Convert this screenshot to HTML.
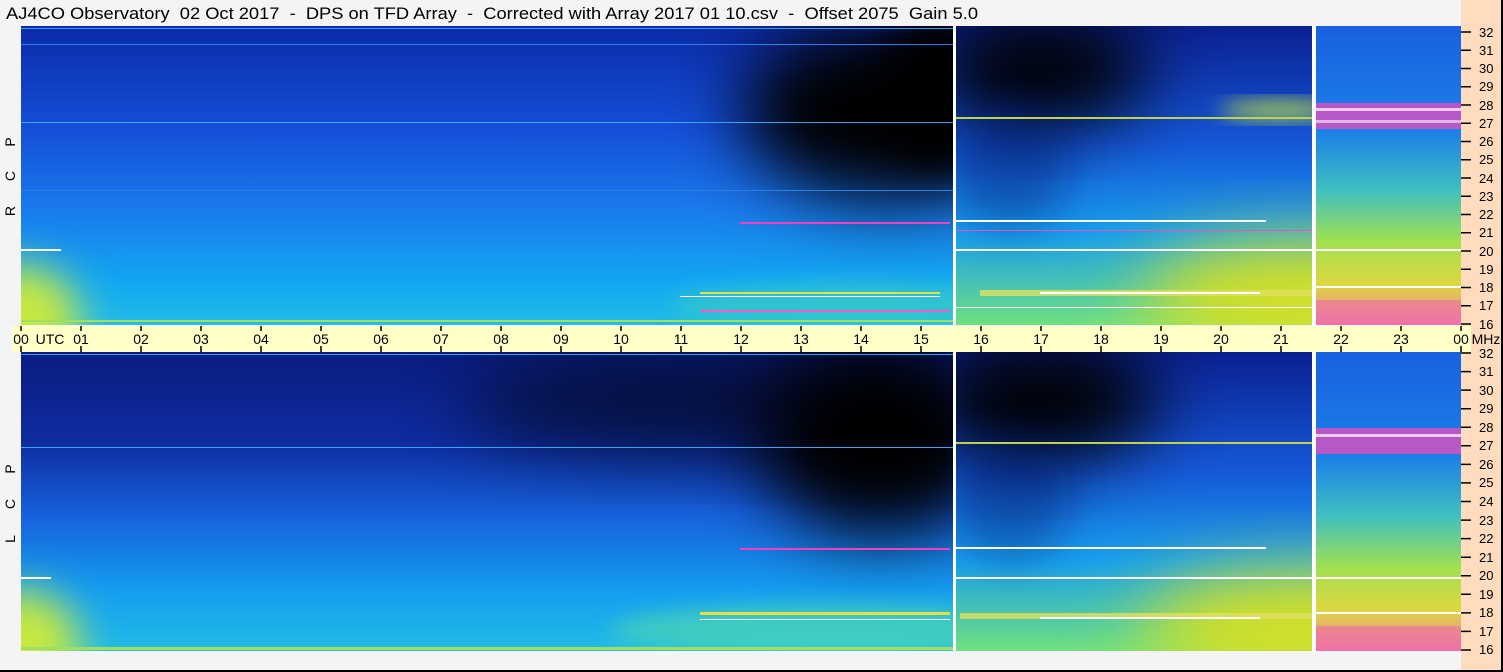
<!DOCTYPE html>
<html><head><meta charset="utf-8"><style>
html,body{margin:0;padding:0;background:#f4f4f6;width:1503px;height:672px;overflow:hidden}
svg{position:absolute;left:0;top:0}
text{font-family:"Liberation Sans",sans-serif}
</style></head><body>
<svg width="1503" height="672" viewBox="0 0 1503 672">
<defs>
<filter id="b10" x="-50%" y="-50%" width="200%" height="200%"><feGaussianBlur stdDeviation="10"/></filter>
<filter id="b20" x="-50%" y="-50%" width="200%" height="200%"><feGaussianBlur stdDeviation="20"/></filter>
<filter id="b35" x="-50%" y="-50%" width="200%" height="200%"><feGaussianBlur stdDeviation="35"/></filter>
<linearGradient id="gA" x1="0" y1="0" x2="0" y2="1">
<stop offset="0" stop-color="#0b2aa8"/><stop offset="0.35" stop-color="#1450d8"/><stop offset="0.6" stop-color="#1a78ec"/><stop offset="0.85" stop-color="#12a6f2"/><stop offset="1" stop-color="#22bce6"/></linearGradient>
<linearGradient id="gA2" x1="0" y1="0" x2="0" y2="1">
<stop offset="0" stop-color="#0a1c80"/><stop offset="0.3" stop-color="#0e2ca0"/><stop offset="0.55" stop-color="#1662dc"/><stop offset="0.8" stop-color="#149ef0"/><stop offset="1" stop-color="#22bce6"/></linearGradient>
<linearGradient id="gB" x1="0" y1="0" x2="0" y2="1">
<stop offset="0" stop-color="#0a2090"/><stop offset="0.4" stop-color="#1558d8"/><stop offset="0.7" stop-color="#18a0ec"/><stop offset="1" stop-color="#70e080"/></linearGradient>
<linearGradient id="gC" x1="0" y1="0" x2="0" y2="1">
<stop offset="0" stop-color="#1860e0"/><stop offset="0.35" stop-color="#1c80e8"/><stop offset="0.55" stop-color="#40c0c0"/><stop offset="0.72" stop-color="#a0e050"/><stop offset="0.86" stop-color="#dcd840"/><stop offset="1" stop-color="#f080a0"/></linearGradient>
<clipPath id="cA1"><rect x="21" y="26" width="932" height="299"/></clipPath>
<clipPath id="cB1"><rect x="956" y="26" width="356" height="299"/></clipPath>
<clipPath id="cC1"><rect x="1316" y="26" width="145" height="299"/></clipPath>
<clipPath id="cA2"><rect x="21" y="352" width="932" height="299"/></clipPath>
<clipPath id="cB2"><rect x="956" y="352" width="356" height="299"/></clipPath>
<clipPath id="cC2"><rect x="1316" y="352" width="145" height="299"/></clipPath>
</defs>
<rect x="0" y="0" width="1503" height="672" fill="#f4f4f6"/>
<rect x="1461" y="0" width="40" height="670" fill="#ffdcbe"/>
<rect x="1501" y="0" width="2" height="672" fill="#000"/>
<rect x="0" y="670" width="1503" height="2" fill="#000"/>
<text x="6" y="19" font-size="16.5" fill="#000" xml:space="preserve" textLength="972" lengthAdjust="spacingAndGlyphs">AJ4CO Observatory  02 Oct 2017  -  DPS on TFD Array  -  Corrected with Array 2017 01 10.csv  -  Offset 2075  Gain 5.0</text>

<rect x="21" y="26" width="1440" height="299" fill="#fff"/>
<g clip-path="url(#cA1)">
<rect x="21" y="26" width="932" height="299" fill="url(#gA)"/>
<ellipse cx="890" cy="110" rx="150" ry="90" fill="#000" filter="url(#b35)"/>
<ellipse cx="940" cy="90" rx="60" ry="80" fill="#000" filter="url(#b20)"/>
<ellipse cx="20" cy="320" rx="60" ry="55" fill="#c8e840" filter="url(#b20)"/>
<ellipse cx="860" cy="305" rx="190" ry="22" fill="#40d0c0" opacity="0.6" filter="url(#b10)"/>
<rect x="21" y="28" width="932" height="1" fill="#30a0f0"/>
<rect x="21" y="44" width="932" height="1" fill="#2a80e8"/>
<rect x="21" y="122" width="932" height="1" fill="#40a0f0"/>
<rect x="21" y="190" width="932" height="1" fill="#2a80e0"/>
<rect x="740" y="222" width="210" height="2" fill="#f040c0"/>
<rect x="700" y="292" width="240" height="2" fill="#e8e040"/>
<rect x="680" y="296" width="260" height="1" fill="#ffffff"/>
<rect x="700" y="310" width="250" height="2" fill="#f060c0"/>
<rect x="21" y="249" width="40" height="2" fill="#ffffff"/>
<rect x="21" y="320" width="932" height="2" fill="#a0e060"/>
</g>
<g clip-path="url(#cB1)">
<rect x="956" y="26" width="356" height="299" fill="url(#gB)"/>
<ellipse cx="1040" cy="70" rx="110" ry="55" fill="#000" filter="url(#b35)"/>
<ellipse cx="1010" cy="170" rx="60" ry="60" fill="#041060" opacity="0.35" filter="url(#b20)"/>
<ellipse cx="1310" cy="300" rx="170" ry="60" fill="#d8e020" filter="url(#b35)"/>
<ellipse cx="1280" cy="110" rx="60" ry="8" fill="#c0e040" filter="url(#b10)"/>
<rect x="956" y="117" width="356" height="2" fill="#c0d050"/>
<rect x="956" y="220" width="310" height="2" fill="#fff"/>
<rect x="956" y="230" width="356" height="1" fill="#f050c0"/>
<rect x="956" y="249" width="356" height="2" fill="#fff"/>
<rect x="980" y="290" width="332" height="6" fill="#e0e060" opacity="0.8"/>
<rect x="1040" y="292" width="220" height="2" fill="#fff"/>
<rect x="956" y="307" width="356" height="1" fill="#fff"/>
</g>
<g clip-path="url(#cC1)">
<rect x="1316" y="26" width="145" height="299" fill="url(#gC)"/>
<rect x="1316" y="103" width="145" height="26" fill="#e050c0" opacity="0.8"/>
<rect x="1316" y="108" width="145" height="3" fill="#fff" opacity="0.7"/>
<rect x="1316" y="120" width="145" height="3" fill="#f0e0f0" opacity="0.7"/>
<rect x="1316" y="249" width="145" height="2" fill="#fff"/>
<rect x="1316" y="286" width="145" height="2" fill="#fff"/>
<rect x="1316" y="300" width="145" height="25" fill="#f060b0" opacity="0.5"/>
</g>
<rect x="953" y="26" width="3" height="299" fill="#fff"/>
<rect x="1312" y="26" width="4" height="299" fill="#fff"/>

<rect x="12" y="326" width="1459" height="26" fill="#ffffc8"/>
<g stroke="#000" stroke-width="1.5">
<path d="M21 326v5M81 326v5M141 326v5M201 326v5M261 326v5M321 326v5M381 326v5M441 326v5M501 326v5M561 326v5M621 326v5M681 326v5M741 326v5M801 326v5M861 326v5M921 326v5M981 326v5M1041 326v5M1101 326v5M1161 326v5M1221 326v5M1281 326v5M1341 326v5M1401 326v5M1461 326v5"/>
<path d="M21 346v6M81 346v6M141 346v6M201 346v6M261 346v6M321 346v6M381 346v6M441 346v6M501 346v6M561 346v6M621 346v6M681 346v6M741 346v6M801 346v6M861 346v6M921 346v6M981 346v6M1041 346v6M1101 346v6M1161 346v6M1221 346v6M1281 346v6M1341 346v6M1401 346v6M1461 346v6"/>
</g>
<g font-size="14" fill="#000" text-anchor="middle">
<text x="21" y="344">00</text><text x="50" y="344">UTC</text><text x="81" y="344">01</text><text x="141" y="344">02</text><text x="201" y="344">03</text><text x="261" y="344">04</text><text x="321" y="344">05</text><text x="381" y="344">06</text><text x="441" y="344">07</text><text x="501" y="344">08</text><text x="561" y="344">09</text><text x="621" y="344">10</text><text x="681" y="344">11</text><text x="741" y="344">12</text><text x="801" y="344">13</text><text x="861" y="344">14</text><text x="921" y="344">15</text><text x="981" y="344">16</text><text x="1041" y="344">17</text><text x="1101" y="344">18</text><text x="1161" y="344">19</text><text x="1221" y="344">20</text><text x="1281" y="344">21</text><text x="1341" y="344">22</text><text x="1401" y="344">23</text><text x="1461" y="344">00</text><text x="1486" y="344">MHz</text>
</g>

<rect x="21" y="352" width="1440" height="299" fill="#fff"/>
<g clip-path="url(#cA2)">
<rect x="21" y="352" width="932" height="299" fill="url(#gA2)"/>
<ellipse cx="720" cy="405" rx="260" ry="50" fill="#000" opacity="0.6" filter="url(#b35)"/>
<ellipse cx="880" cy="440" rx="120" ry="95" fill="#000" filter="url(#b35)"/>
<ellipse cx="20" cy="645" rx="60" ry="55" fill="#c8e840" filter="url(#b20)"/>
<ellipse cx="830" cy="630" rx="220" ry="25" fill="#50d8b0" opacity="0.7" filter="url(#b10)"/>
<rect x="21" y="354" width="932" height="1" fill="#30a0f0"/>
<rect x="21" y="447" width="932" height="1" fill="#40a0f0"/>
<rect x="740" y="548" width="210" height="2" fill="#f040c0"/>
<rect x="700" y="612" width="250" height="3" fill="#e8e040"/>
<rect x="700" y="619" width="250" height="1" fill="#fff"/>
<rect x="21" y="577" width="30" height="2" fill="#fff"/>
<rect x="21" y="647" width="932" height="3" fill="#a0e060"/>
</g>
<g clip-path="url(#cB2)">
<rect x="956" y="352" width="356" height="299" fill="url(#gB)"/>
<ellipse cx="1040" cy="400" rx="120" ry="60" fill="#000" filter="url(#b35)"/>
<ellipse cx="1010" cy="500" rx="60" ry="60" fill="#041060" opacity="0.35" filter="url(#b20)"/>
<ellipse cx="1310" cy="630" rx="170" ry="60" fill="#d8e020" filter="url(#b35)"/>
<rect x="956" y="442" width="356" height="2" fill="#c0d050"/>
<rect x="956" y="547" width="310" height="2" fill="#fff"/>
<rect x="956" y="577" width="356" height="2" fill="#fff"/>
<rect x="960" y="613" width="352" height="6" fill="#e0e060" opacity="0.8"/>
<rect x="1040" y="617" width="220" height="2" fill="#fff"/>
</g>
<g clip-path="url(#cC2)">
<rect x="1316" y="352" width="145" height="299" fill="url(#gC)"/>
<rect x="1316" y="428" width="145" height="26" fill="#e050c0" opacity="0.8"/>
<rect x="1316" y="434" width="145" height="3" fill="#fff" opacity="0.7"/>
<rect x="1316" y="577" width="145" height="2" fill="#fff"/>
<rect x="1316" y="612" width="145" height="2" fill="#fff"/>
<rect x="1316" y="626" width="145" height="25" fill="#f060b0" opacity="0.5"/>
</g>
<rect x="953" y="352" width="3" height="299" fill="#fff"/>
<rect x="1312" y="352" width="4" height="299" fill="#fff"/>

<g stroke="#000" stroke-width="1.5">
<path d="M1461 32h10M1461 50.3h10M1461 68.5h10M1461 86.8h10M1461 105h10M1461 123.3h10M1461 141.5h10M1461 159.8h10M1461 178h10M1461 196.3h10M1461 214.5h10M1461 232.8h10M1461 251h10M1461 269.3h10M1461 287.5h10M1461 305.8h10M1461 324h10"/>
<path d="M1461 353h10M1461 371.6h10M1461 390.1h10M1461 408.7h10M1461 427.2h10M1461 445.8h10M1461 464.4h10M1461 482.9h10M1461 501.5h10M1461 520.1h10M1461 538.6h10M1461 557.2h10M1461 575.7h10M1461 594.3h10M1461 612.9h10M1461 631.4h10M1461 650h10"/>
</g>
<g font-size="13" fill="#000">
<text x="1479" y="37">32</text><text x="1479" y="55">31</text><text x="1479" y="73">30</text><text x="1479" y="91">29</text><text x="1479" y="110">28</text><text x="1479" y="128">27</text><text x="1479" y="146">26</text><text x="1479" y="164">25</text><text x="1479" y="183">24</text><text x="1479" y="201">23</text><text x="1479" y="219">22</text><text x="1479" y="237">21</text><text x="1479" y="256">20</text><text x="1479" y="274">19</text><text x="1479" y="292">18</text><text x="1479" y="310">17</text><text x="1479" y="329">16</text>
<text x="1479" y="358">32</text><text x="1479" y="376">31</text><text x="1479" y="395">30</text><text x="1479" y="413">29</text><text x="1479" y="432">28</text><text x="1479" y="450">27</text><text x="1479" y="469">26</text><text x="1479" y="487">25</text><text x="1479" y="506">24</text><text x="1479" y="525">23</text><text x="1479" y="543">22</text><text x="1479" y="562">21</text><text x="1479" y="580">20</text><text x="1479" y="599">19</text><text x="1479" y="617">18</text><text x="1479" y="636">17</text><text x="1479" y="654">16</text>
</g>
<g font-size="14" fill="#000" text-anchor="middle">
<text transform="translate(15,211) rotate(-90)">R</text>
<text transform="translate(15,176) rotate(-90)">C</text>
<text transform="translate(15,142) rotate(-90)">P</text>
<text transform="translate(15,539) rotate(-90)">L</text>
<text transform="translate(15,504) rotate(-90)">C</text>
<text transform="translate(15,469) rotate(-90)">P</text>
</g>
</svg>
</body></html>
